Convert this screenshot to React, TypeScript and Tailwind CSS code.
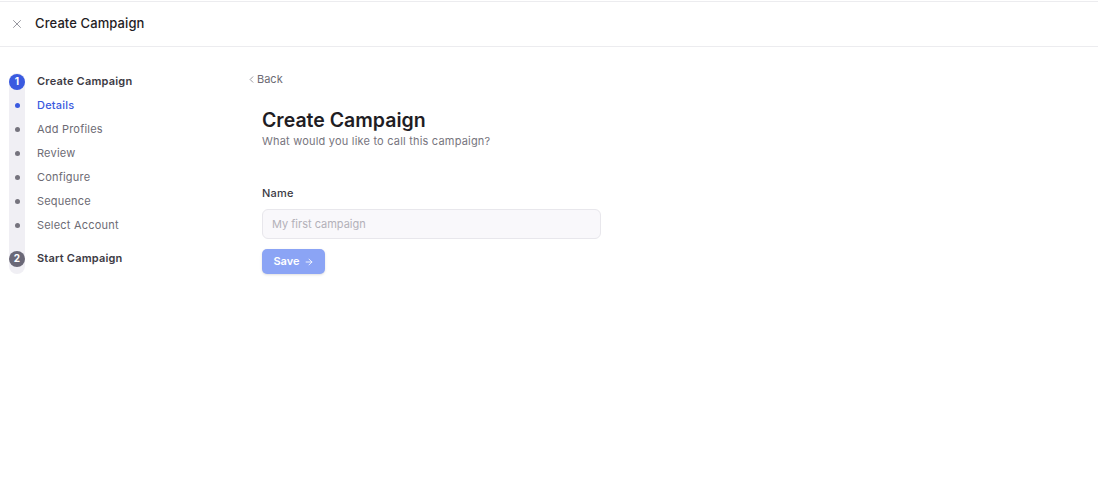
import React, { useState } from "react";
import { X, ChevronLeft, ArrowRight } from "lucide-react";

const SUB_STEPS = ["Details", "Add Profiles", "Review", "Configure", "Sequence", "Select Account"];

export default function App() {
  const [name, setName] = useState("");
  const activeSub = 0;

  return (
    <div className="min-h-screen bg-white text-[#1f1d24]" style={{ fontFamily: "Inter, 'Noto Sans', sans-serif" }}>
      {/* Header */}
      <div className="mt-px border-t border-b border-[#ececef] h-[46px] flex items-center pl-[10px] gap-[11px]">
        <X size={14} strokeWidth={1.5} className="text-[#8a8a92]" />
        <span className="text-[13px] font-medium tracking-[0.1px]">Create Campaign</span>
      </div>

      <div className="flex">
        {/* Sidebar steps */}
        <div className="w-[248px] pt-[26px] pl-[9px]">
          <div className="relative">
            <div className="absolute left-0 top-0 bottom-0 w-[16px] rounded-full bg-[#f0eff4]" />
            <div className="relative flex flex-col">
              <div className="flex items-center h-[17px] gap-[12px] mb-[3px]">
                <span className="w-[16px] h-[16px] rounded-full bg-[#3a5ae0] text-white text-[10px] font-bold flex items-center justify-center">1</span>
                <span className="text-[11px] font-semibold text-[#3c3a44] tracking-[0.2px]">Create Campaign</span>
              </div>
              {SUB_STEPS.map((s, i) => (
                <div key={s} className="flex items-center h-[24px] gap-[12px]">
                  <span className="w-[16px] flex justify-center">
                    <span className={`w-[5px] h-[5px] rounded-full ${i === activeSub ? "bg-[#3a5ae0]" : "bg-[#75737d]"}`} />
                  </span>
                  <span className={`text-[11px] tracking-[0.2px] ${i === activeSub ? "text-[#3a5ae0] font-medium" : "text-[#6d6b74]"}`}>{s}</span>
                </div>
              ))}
              <div className="flex items-center h-[17px] gap-[12px] mt-[13px] mb-[7px]">
                <span className="w-[16px] h-[16px] rounded-full bg-[#6a6877] text-white text-[10px] font-bold flex items-center justify-center">2</span>
                <span className="text-[11px] font-semibold text-[#3c3a44] tracking-[0.2px]">Start Campaign</span>
              </div>
            </div>
          </div>
        </div>

        {/* Main */}
        <div className="pt-[24px]">
          <button className="-ml-[2px] flex items-center text-[11px] text-[#6d6b74]">
            <ChevronLeft size={11} strokeWidth={1.5} />
            Back
          </button>
          <div className="pl-[14px] pt-[19px]">
            <h1 className="text-[19.5px] font-semibold leading-[26px] text-[#1f1d24]">Create Campaign</h1>
            <p className="text-[11px] text-[#77757e] leading-[14px] mt-px tracking-[0.2px]">What would you like to call this campaign?</p>

            <label className="block text-[11px] font-medium text-[#3c3a44] mt-[37px] tracking-[0.2px]">Name</label>
            <input
              value={name}
              onChange={(e) => setName(e.target.value)}
              placeholder="My first campaign"
              className="mt-[8px] block w-[339px] h-[30px] rounded-[6px] border border-[#e8e7ec] bg-[#f9f8fb] px-[9px] text-[11px] placeholder:text-[#b3b1b9] outline-none"
            />
            <button
              disabled={!name}
              className="mt-[10px] h-[25px] w-[63px] rounded-[5px] bg-[#8ba4f5] text-white text-[11px] font-semibold flex items-center justify-center gap-[4px] shadow-sm"
            >
              Save <ArrowRight size={10} strokeWidth={2} />
            </button>
          </div>
        </div>
      </div>
    </div>
  );
}
